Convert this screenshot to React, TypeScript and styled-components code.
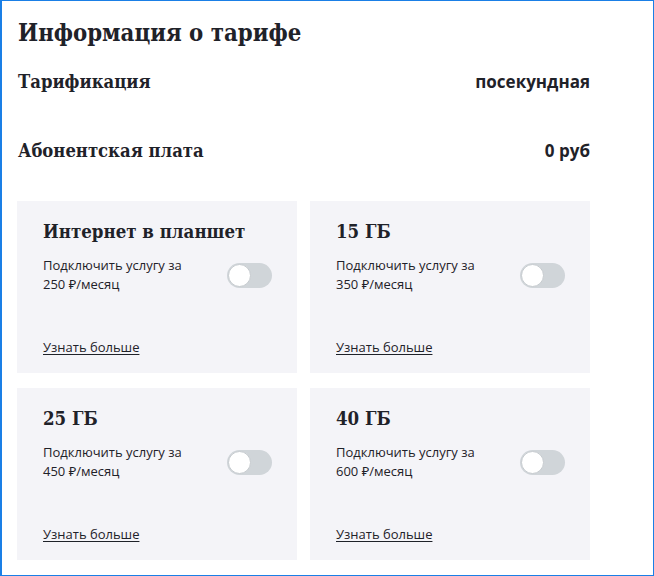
import React, { useState } from 'react';
import styled, { createGlobalStyle } from 'styled-components';

const GlobalStyle = createGlobalStyle`
  html, body {
    margin: 0;
    padding: 0;
    background: #fff;
  }
  * {
    box-sizing: border-box;
  }
`;

const serif = `"DejaVu Serif", "Liberation Serif", serif`;
const sans = `"Open Sans", "Noto Sans", "Liberation Sans", sans-serif`;

const Frame = styled.div`
  width: 654px;
  height: 576px;
  border: 1px solid #1a7fe6;
  border-left-width: 2px;
  padding: 16px 62px 0 15px;
  color: #1f2229;
  overflow: hidden;
`;

const PageTitle = styled.h1`
  margin: 0 0 0 1px;
  height: 32px;
  line-height: 32px;
  font-family: ${serif};
  font-stretch: condensed;
  font-weight: 700;
  font-size: 23.7px;
`;

const InfoRow = styled.div<{ $gap: number }>`
  display: flex;
  justify-content: space-between;
  align-items: center;
  height: 32px;
  margin-top: ${p => p.$gap}px;
  padding: 0 1px;
`;

const InfoLabel = styled.span`
  font-family: ${serif};
  font-stretch: condensed;
  font-weight: 700;
  font-size: 18.3px;
`;

const InfoValue = styled.span`
  font-family: ${sans};
  font-weight: 700;
  font-size: 17px;
`;

const Grid = styled.div`
  display: grid;
  grid-template-columns: 280px 280px;
  grid-auto-rows: 172px;
  column-gap: 13px;
  row-gap: 15px;
  margin-top: 35px;
`;

const Card = styled.div`
  background: #f4f4f8;
  display: flex;
  flex-direction: column;
  padding: 17px 25px 17px 26px;
`;

const CardTitle = styled.h3`
  margin: 0;
  font-family: ${serif};
  font-stretch: condensed;
  font-weight: 700;
  font-size: 18.5px;
  line-height: 28px;
`;

const OptionRow = styled.div`
  display: flex;
  justify-content: space-between;
  align-items: center;
  margin-top: 10px;
`;

const OptionText = styled.p`
  margin: 0;
  max-width: 160px;
  font-family: ${sans};
  font-size: 13px;
  line-height: 19px;
`;

const Track = styled.button<{ $on: boolean }>`
  position: relative;
  width: 45px;
  height: 25px;
  border: none;
  border-radius: 13px;
  padding: 0;
  background: ${p => (p.$on ? '#3fcbff' : '#d0d5d9')};
  cursor: pointer;
`;

const Knob = styled.span<{ $on: boolean }>`
  position: absolute;
  top: 1px;
  left: ${p => (p.$on ? '21px' : '1px')};
  width: 23px;
  height: 23px;
  border-radius: 50%;
  background: #fff;
  border: 1px solid #c6cbcf;
  transition: left 0.2s ease;
`;

const MoreLink = styled.a`
  margin-top: auto;
  align-self: flex-start;
  font-family: ${sans};
  font-size: 13px;
  line-height: 18px;
  color: #1f2229;
  text-decoration: underline;
  text-underline-offset: 2px;
`;

interface Option {
  title: string;
  price: number;
}

const options: Option[] = [
  { title: 'Интернет в планшет', price: 250 },
  { title: '15 ГБ', price: 350 },
  { title: '25 ГБ', price: 450 },
  { title: '40 ГБ', price: 600 },
];

const OptionCard: React.FC<{ option: Option }> = ({ option }) => {
  const [on, setOn] = useState(false);
  return (
    <Card>
      <CardTitle>{option.title}</CardTitle>
      <OptionRow>
        <OptionText>Подключить услугу за {option.price} ₽/месяц</OptionText>
        <Track $on={on} onClick={() => setOn(!on)} aria-label="toggle">
          <Knob $on={on} />
        </Track>
      </OptionRow>
      <MoreLink href="#">Узнать больше</MoreLink>
    </Card>
  );
};

const App: React.FC = () => (
  <>
    <GlobalStyle />
    <Frame>
      <PageTitle>Информация о тарифе</PageTitle>
      <InfoRow $gap={16}>
        <InfoLabel>Тарификация</InfoLabel>
        <InfoValue>посекундная</InfoValue>
      </InfoRow>
      <InfoRow $gap={37}>
        <InfoLabel>Абонентская плата</InfoLabel>
        <InfoValue>0 руб</InfoValue>
      </InfoRow>
      <Grid>
        {options.map(o => (
          <OptionCard key={o.price} option={o} />
        ))}
      </Grid>
    </Frame>
  </>
);

export default App;
